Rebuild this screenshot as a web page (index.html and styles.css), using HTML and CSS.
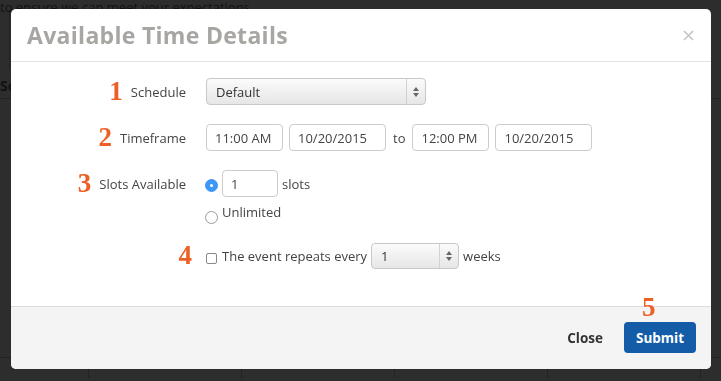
FILE: index.html
```html
<!DOCTYPE html>
<html lang="en">
<head>
    <meta charset="UTF-8">
    <meta name="viewport" content="width=device-width, initial-scale=1.0">
    <title>Available Time Details</title>
    <link rel="stylesheet" href="styles.css">
</head>
<body>
    <div class="page">
        <p class="page-intro">to ensure we can meet your expectations.</p>
        <div class="page-table">
            <div class="page-head"></div>
            <div class="page-row"><span class="page-cell">Sc</span></div>
        </div>
        <div class="page-grid">
            <span></span><span></span><span></span><span></span><span></span>
        </div>
    </div>

    <div class="modal">
        <header class="modal-header">
            <h1>Available Time Details</h1>
            <button class="modal-close" aria-label="Close">
                <svg width="11" height="11" viewBox="0 0 11 11"><path d="M1 1L10 10M10 1L1 10" stroke="#c4c4c4" stroke-width="1.6" fill="none"/></svg>
            </button>
        </header>

        <main class="modal-body">
            <div class="form-row">
                <div class="form-label"><span class="step">1</span>Schedule</div>
                <div class="select select-wide">
                    <span>Default</span>
                    <span class="select-arrow"><svg width="6" height="10" viewBox="0 0 6 10"><path d="M3 0L6 4H0Z M3 10L6 6H0Z" fill="#666"/></svg></span>
                </div>
            </div>

            <div class="form-row">
                <div class="form-label"><span class="step">2</span>Timeframe</div>
                <div class="field-group">
                    <input class="field field-time" type="text" value="11:00 AM">
                    <input class="field field-date" type="text" value="10/20/2015">
                    <span class="field-text">to</span>
                    <input class="field field-time" type="text" value="12:00 PM">
                    <input class="field field-date" type="text" value="10/20/2015">
                </div>
            </div>

            <div class="form-row form-row-top">
                <div class="form-label"><span class="step">3</span>Slots Available</div>
                <div class="slot-options">
                    <div class="slot-line">
                        <span class="radio radio-on"></span>
                        <input class="field field-slots" type="text" value="1">
                        <span>slots</span>
                    </div>
                    <div class="slot-line slot-line-small">
                        <span class="radio"></span>
                        <span>Unlimited</span>
                    </div>
                </div>
            </div>

            <div class="form-row form-row-repeat">
                <div class="form-label"><span class="step step-alone">4</span></div>
                <div class="repeat-line">
                    <span class="checkbox"></span>
                    <span>The event repeats every</span>
                    <div class="select select-small">
                        <span>1</span>
                        <span class="select-arrow"><svg width="6" height="10" viewBox="0 0 6 10"><path d="M3 0L6 4H0Z M3 10L6 6H0Z" fill="#666"/></svg></span>
                    </div>
                    <span>weeks</span>
                </div>
            </div>
        </main>

        <footer class="modal-footer">
            <button class="btn-link">Close</button>
            <button class="btn-primary">Submit<span class="step step-floating">5</span></button>
        </footer>
    </div>
</body>
</html>
```

FILE: styles.css
```css
body {
    margin: 0;
    background-color: #2d2d2d;
    font-family: "Open Sans", Lato, sans-serif;
    overflow: hidden;
    height: 381px;
}

/* page behind the overlay */
.page {
    color: #121212;
}

.page-intro {
    margin: 0;
    font-size: 13px;
    line-height: 15px;
}

.page-table {
    margin-top: 7px;
}

.page-head {
    height: 45px;
    border-left: 1px solid #222;
    margin-left: 9px;
    width: 100px;
    border-bottom: 1px solid #222;
    margin-top: -12px;
    padding-top: 12px;
}

.page-row {
    height: 30px;
    border-bottom: 1px solid #222;
}

.page-cell {
    font-weight: bold;
    font-size: 14px;
    line-height: 36px;
}

.page-grid {
    display: flex;
    margin-top: 258px;
    height: 20px;
    border-top: 1px solid #222;
}

.page-grid span {
    width: 152px;
    border-right: 1px solid #222;
}

.page-grid span:first-child {
    width: 88px;
}

/* modal */
.modal {
    position: fixed;
    top: 9px;
    left: 11px;
    width: 700px;
    height: 360px;
    background-color: #fff;
    border-radius: 5px;
    display: flex;
    flex-direction: column;
    overflow: hidden;
}

.modal-header {
    height: 53px;
    box-sizing: border-box;
    border-bottom: 1px solid #e3e3e3;
    display: flex;
    align-items: center;
    justify-content: space-between;
    padding: 0 17px 0 16px;
}

.modal-header h1 {
    margin: 0;
    font-size: 23px;
    font-weight: bold;
    color: #a8a6a2;
    letter-spacing: 0.3px;
}

.modal-close {
    border: none;
    background: none;
    padding: 0;
    margin-top: 1px;
    display: flex;
}

.modal-body {
    flex: 1;
    padding-top: 16px;
    font-size: 13px;
    color: #444;
}

.form-row {
    display: flex;
    align-items: center;
    margin-bottom: 19px;
}

.form-row-top {
    align-items: flex-start;
    margin-bottom: 21px;
}

.form-label {
    width: 195px;
    box-sizing: border-box;
    padding-right: 20px;
    display: flex;
    align-items: center;
    justify-content: flex-end;
    gap: 8px;
    height: 27px;
}

.step {
    font-family: "Liberation Serif", serif;
    font-weight: bold;
    font-size: 27px;
    line-height: 1;
    color: #ee5f26;
}

.step-alone {
    margin-right: -6px;
}

.step-floating {
    position: absolute;
    top: -28px;
    left: 18px;
}

.select {
    height: 27px;
    box-sizing: border-box;
    border: 1px solid #c8c8c8;
    border-radius: 4px;
    background: linear-gradient(#fbfbfb, #e6e6e6);
    display: flex;
    align-items: center;
    justify-content: space-between;
    padding-left: 9px;
    color: #333;
}

.select-wide {
    width: 220px;
}

.select-small {
    width: 88px;
    height: 26px;
}

.select-arrow {
    width: 18px;
    height: 100%;
    border-left: 1px solid #d2d2d2;
    display: flex;
    align-items: center;
    justify-content: center;
}

.field-group {
    display: flex;
    align-items: center;
    gap: 6px;
}

.field {
    height: 27px;
    box-sizing: border-box;
    border: 1px solid #ccc;
    border-radius: 4px;
    padding: 0 8px;
    font-family: "Open Sans", Lato, sans-serif;
    font-size: 13px;
    color: #444;
    outline: none;
}

.field-time {
    width: 77px;
}

.field-date {
    width: 97px;
}

.field-text {
    margin: 0 1px;
}

.field-slots {
    width: 56px;
}

.slot-options {
    display: flex;
    flex-direction: column;
    gap: 8px;
}

.slot-line {
    display: flex;
    align-items: center;
    gap: 4px;
    margin-left: -1px;
}

.slot-line-small {
    align-items: flex-end;
    height: 16px;
}

.radio {
    width: 13px;
    height: 13px;
    box-sizing: border-box;
    border-radius: 50%;
    border: 1px solid #999;
    background: #fff;
    position: relative;
    margin-top: 6px;
}

.slot-line-small .radio {
    margin-top: 0;
    margin-bottom: -3px;
}

.radio-on {
    background: #3d97f6;
    border-color: #3d97f6;
    margin-top: 4px;
}

.radio-on::after {
    content: "";
    position: absolute;
    top: 4px;
    left: 4px;
    width: 3px;
    height: 3px;
    border-radius: 50%;
    background: #fff;
}

.repeat-line {
    display: flex;
    align-items: center;
    gap: 4px;
}

.checkbox {
    width: 11px;
    height: 11px;
    box-sizing: border-box;
    border: 1px solid #888;
    border-radius: 2px;
    margin-top: 6px;
    margin-right: 1px;
}

.modal-footer {
    height: 63px;
    box-sizing: border-box;
    border-top: 1px solid #dcdcdc;
    background-color: #f4f4f4;
    display: flex;
    align-items: center;
    justify-content: flex-end;
    padding-right: 15px;
    gap: 9px;
}

.btn-link {
    border: none;
    background: none;
    font-family: "Open Sans", Lato, sans-serif;
    font-weight: bold;
    font-size: 13.5px;
    color: #333;
    padding: 8px 12px;
}

.btn-primary {
    position: relative;
    width: 72px;
    height: 31px;
    border: none;
    border-radius: 4px;
    background-color: #145ca8;
    color: #fff;
    font-family: "Open Sans", Lato, sans-serif;
    font-weight: bold;
    font-size: 13.5px;
    margin-top: -1px;
}
```
